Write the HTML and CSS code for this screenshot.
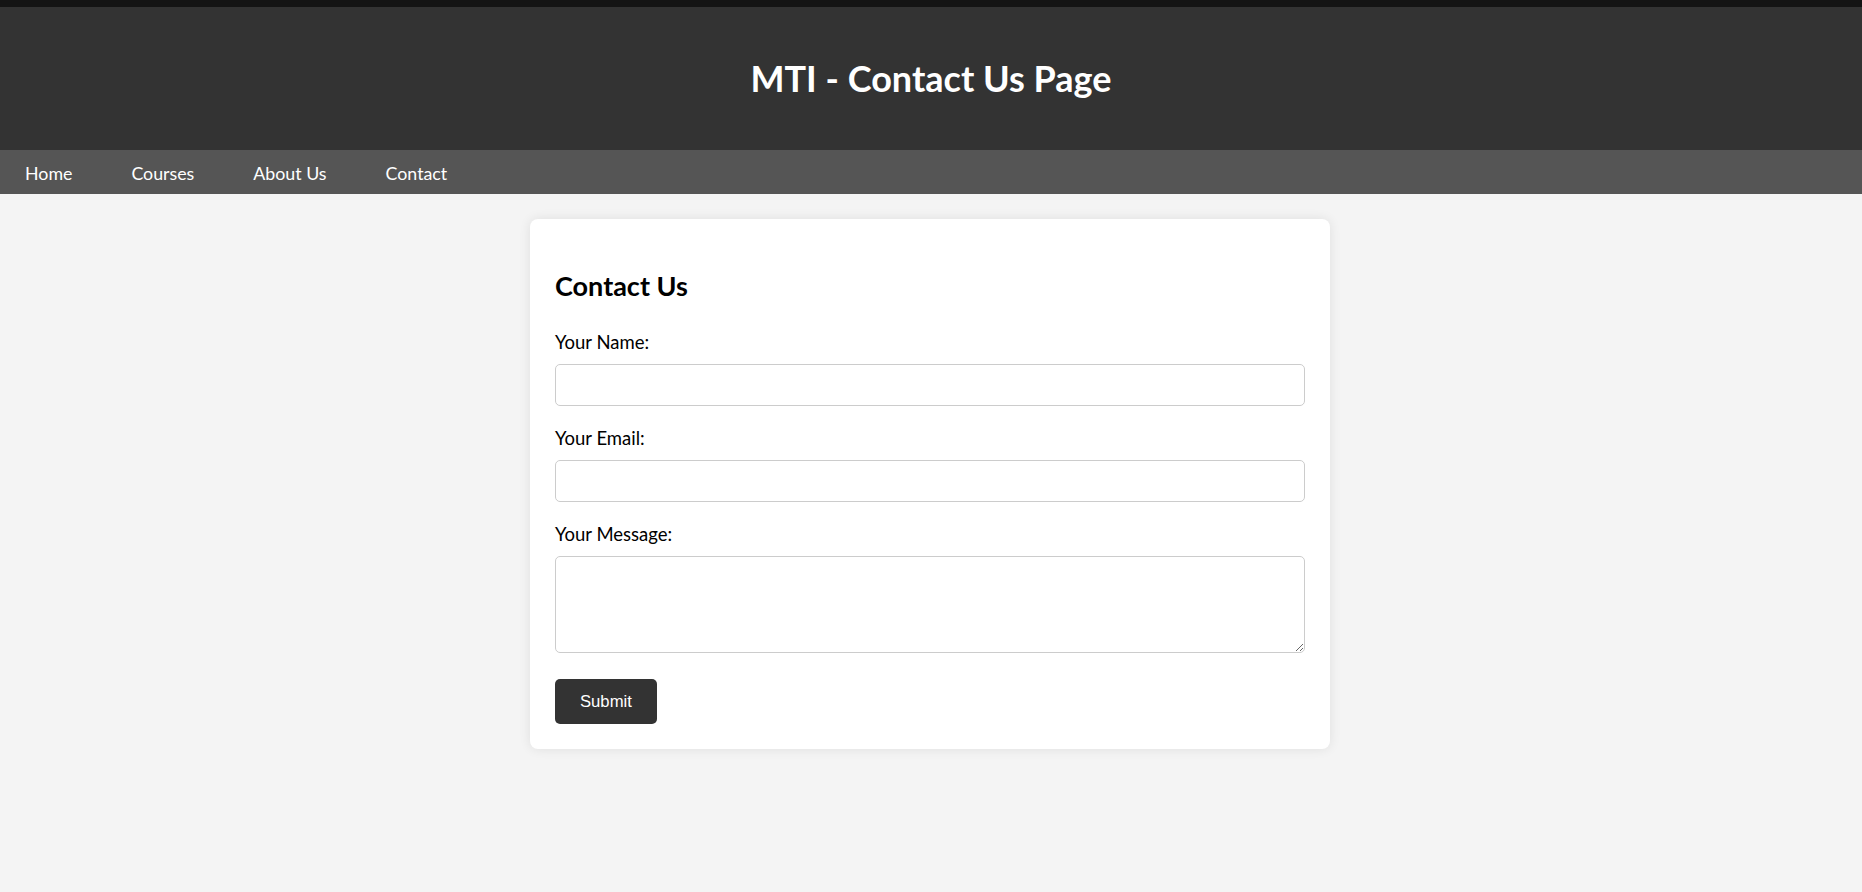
FILE: index.html
```html
<!DOCTYPE html>
<html lang="en">
<head>
<meta charset="utf-8">
<title>MTI - Contact Us Page</title>
<link rel="stylesheet" href="styles.css">
</head>
<body>
<header class="site-header">
  <h1 class="site-title">MTI - Contact Us Page</h1>
</header>
<nav class="site-nav">
  <a href="#" class="nav-link">Home</a>
  <a href="#" class="nav-link">Courses</a>
  <a href="#" class="nav-link">About Us</a>
  <a href="#" class="nav-link">Contact</a>
</nav>
<main class="page">
  <section class="card">
    <h2 class="card-title">Contact Us</h2>
    <form class="contact-form">
      <label class="field-label" for="name">Your Name:</label>
      <input class="field-input" type="text" id="name">
      <label class="field-label" for="email">Your Email:</label>
      <input class="field-input" type="email" id="email">
      <label class="field-label" for="message">Your Message:</label>
      <textarea class="field-textarea" id="message"></textarea>
      <button type="submit" class="submit-btn">Submit</button>
    </form>
  </section>
</main>
</body>
</html>
```

FILE: styles.css
```css
* { box-sizing: border-box; }

html, body {
  margin: 0;
  padding: 0;
}

body {
  background: #f4f4f4;
  font-family: Lato, "Open Sans", sans-serif;
  color: #000;
  min-height: 892px;
}

.site-header {
  background: #333333;
  border-top: 7px solid #141414;
  padding: 53px 0 54px;
  text-align: center;
}

.site-title {
  margin: 0;
  color: #fff;
  font-size: 36px;
  line-height: 36px;
  font-weight: 700;
}

.site-nav {
  background: #555555;
  height: 44px;
  display: flex;
  gap: 59px;
  padding-left: 25px;
}

.nav-link {
  color: #fff;
  text-decoration: none;
  font-size: 17.8px;
  line-height: 42px;
  padding-top: 2px;
}

.page {
  padding: 25px 2px 0 0;
}

.card {
  width: 800px;
  margin: 0 auto;
  background: #fff;
  border-radius: 8px;
  padding: 25px;
  box-shadow: 0 0 12px rgba(0, 0, 0, 0.09);
}

.card-title {
  margin: 25px 0 27px;
  font-size: 27px;
  line-height: 34px;
  font-weight: 700;
}

.contact-form {
  display: flex;
  flex-direction: column;
}

.field-label {
  display: block;
  font-size: 18.5px;
  line-height: 24px;
  margin-bottom: 10px;
}

.field-input,
.field-textarea {
  width: 100%;
  border: 1px solid #cccccc;
  border-radius: 5px;
  background: #fff;
  font-family: inherit;
  font-size: 16px;
  padding: 10px;
}

.field-input {
  height: 42px;
  margin-bottom: 20px;
}

.field-textarea {
  height: 97px;
  margin-bottom: 26px;
}

.submit-btn {
  align-self: flex-start;
  background: #333333;
  color: #fff;
  border: none;
  border-radius: 5px;
  font-family: Arial, "Liberation Sans", sans-serif;
  font-size: 16.67px;
  height: 45px;
  padding: 0 25px;
}
```
